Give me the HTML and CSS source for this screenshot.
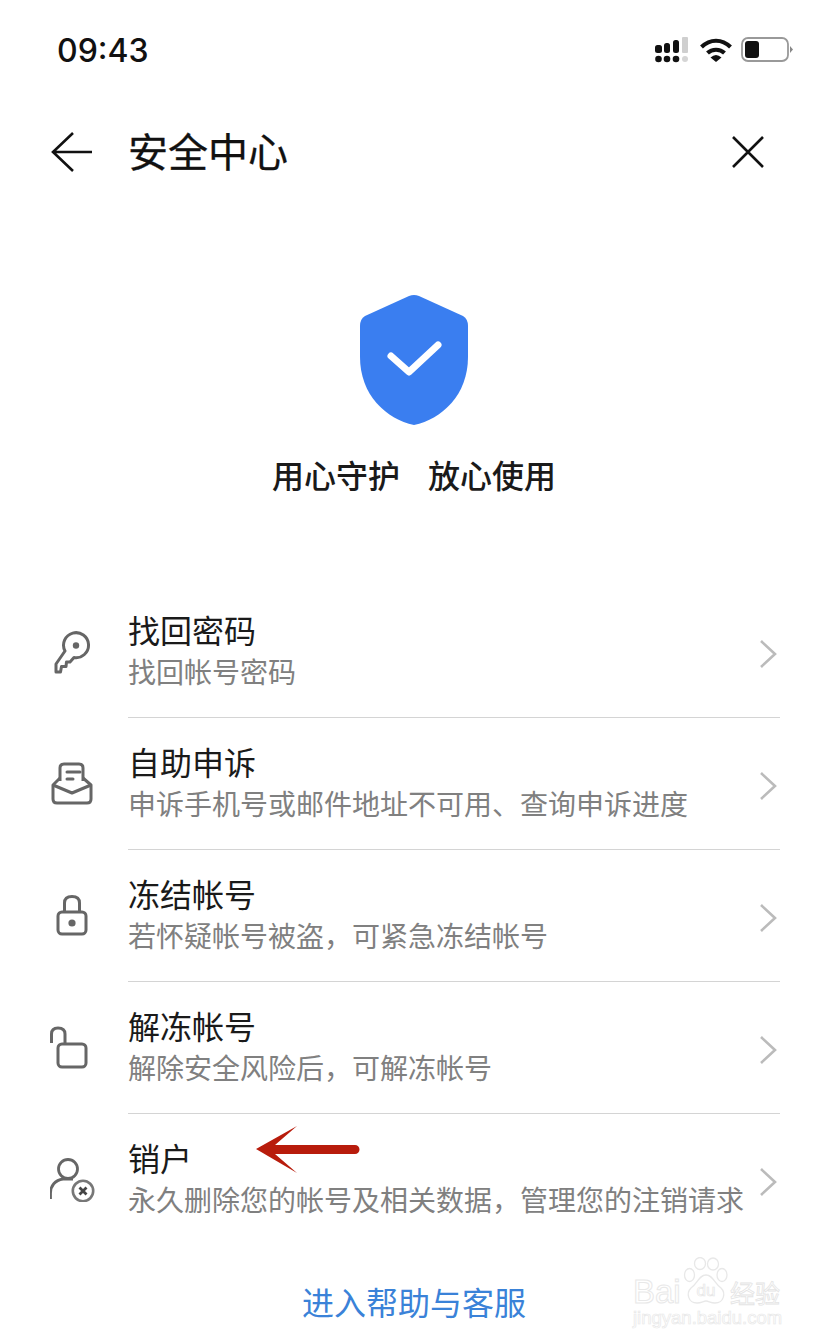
FILE: index.html
```html
<!DOCTYPE html>
<html lang="zh-CN">
<head>
<meta charset="utf-8">
<title>安全中心</title>
<link rel="stylesheet" href="styles.css">
</head>
<body>
<div class="page">
  <header class="status">
    <span class="time">09:43</span>
    <div class="status-icons">
      <svg class="sig" width="34" height="26" viewBox="0 0 34 26">
        <g fill="#111">
          <rect x="0" y="8" width="7" height="8" rx="2.500"/><rect x="9" y="6" width="6" height="10" rx="2.500"/><rect x="18" y="3" width="6" height="13" rx="2.500"/>
          <circle cx="3.500" cy="22" r="3.300"/><circle cx="12" cy="22" r="3.300"/><circle cx="21" cy="22" r="3.300"/>
        </g>
        <rect x="27" y="0" width="6" height="16" rx="1" fill="#cfcfcf"/><circle cx="30" cy="22" r="3" fill="#d5d5d5"/>
      </svg>
      <svg class="wifi" width="32" height="26" viewBox="0 0 32 26">
        <g fill="none" stroke="#111" stroke-width="4">
          <path d="M1.500 10C10 1.500 22 1.500 30.500 10"/><path d="M7.500 16C12 11.500 20 11.500 24.500 16"/>
        </g>
        <path d="M10.500 20.500Q16 15.500 21.500 20.500L16 25Z" fill="#111"/>
      </svg>
      <svg class="batt" width="52" height="26" viewBox="0 0 52 26">
        <rect x="1" y="1" width="46" height="23" rx="6" fill="none" stroke="#999" stroke-width="1.800"/>
        <rect x="4" y="4" width="14" height="17" rx="3" fill="#111"/>
        <path d="M49 9L52 12.500L49 16Z" fill="#888"/>
      </svg>
    </div>
  </header>

  <nav class="nav">
    <svg class="back" width="42" height="42" viewBox="0 0 42 42">
      <path d="M22 2L2 21L22 40M2 21H41" fill="none" stroke="#111" stroke-width="2.600"/>
    </svg>
    <h1 class="nav-title">安全中心</h1>
    <svg class="close" width="36" height="36" viewBox="0 0 36 36">
      <path d="M3 3L33 33M33 3L3 33" fill="none" stroke="#111" stroke-width="2.600"/>
    </svg>
  </nav>

  <section class="hero">
    <svg class="shield" width="108" height="130" viewBox="0 0 108 130">
      <path d="M49 1Q54 -1 59 1L103 21Q108 24 108 31V62C108 100 82 124 54 130C26 124 0 100 0 62V31Q0 24 5 21Z" fill="#3a7ef0"/>
      <path d="M31 61L49 77L78 50" fill="none" stroke="#fff" stroke-width="7" stroke-linecap="round" stroke-linejoin="round"/>
    </svg>
    <p class="slogan"><span>用心守护</span><span>放心使用</span></p>
  </section>

  <ul class="list">
    <li class="row">
      <div class="row-icon">
        <svg width="44" height="44" viewBox="0 0 44 44" fill="none" stroke="#666" stroke-width="3">
          <path d="M15 21A12.500 12.500 0 1 1 24 27.500L20 32H16.500L16 36.500H11.500L10.500 42H6V34Z" stroke-linejoin="round"/>
          <circle cx="26" cy="15.500" r="3.200" fill="#666" stroke="none"/>
        </svg>
      </div>
      <div class="row-body">
        <div class="row-text"><div class="row-title">找回密码</div><div class="row-sub">找回帐号密码</div></div>
        <svg class="chev" width="18" height="28" viewBox="0 0 18 28"><path d="M2 1L16 14L2 27" fill="none" stroke="#bbb" stroke-width="2.600"/></svg>
      </div>
    </li>
    <li class="row">
      <div class="row-icon">
        <svg width="44" height="44" viewBox="0 0 44 44" fill="none" stroke="#666" stroke-width="3" stroke-linejoin="round">
          <path d="M10 19V6Q10 2 14 2H29Q33 2 33 6V19"/>
          <path d="M10 16L3 23V37Q3 41 7 41H37Q41 41 41 37V23L33 16"/>
          <path d="M3 23L22 31L41 23"/>
          <path d="M17 10H30M17 17H23" stroke-linecap="round"/>
        </svg>
      </div>
      <div class="row-body">
        <div class="row-text"><div class="row-title">自助申诉</div><div class="row-sub">申诉手机号或邮件地址不可用、查询申诉进度</div></div>
        <svg class="chev" width="18" height="28" viewBox="0 0 18 28"><path d="M2 1L16 14L2 27" fill="none" stroke="#bbb" stroke-width="2.600"/></svg>
      </div>
    </li>
    <li class="row">
      <div class="row-icon">
        <svg width="44" height="44" viewBox="0 0 44 44" fill="none" stroke="#666" stroke-width="3">
          <rect x="8" y="18" width="28" height="22" rx="4"/>
          <path d="M14.500 18V9Q14.500 2.500 22 2.500Q29.500 2.500 29.500 9V18"/>
          <circle cx="22" cy="29" r="3.600" fill="#666" stroke="none"/>
        </svg>
      </div>
      <div class="row-body">
        <div class="row-text"><div class="row-title">冻结帐号</div><div class="row-sub">若怀疑帐号被盗，可紧急冻结帐号</div></div>
        <svg class="chev" width="18" height="28" viewBox="0 0 18 28"><path d="M2 1L16 14L2 27" fill="none" stroke="#bbb" stroke-width="2.600"/></svg>
      </div>
    </li>
    <li class="row">
      <div class="row-icon">
        <svg width="44" height="44" viewBox="0 0 44 44" fill="none" stroke="#666" stroke-width="3">
          <rect x="8" y="18" width="28" height="23" rx="4"/>
          <path d="M1.500 17V8Q1.500 2 8 2Q15 2 15 8V18"/>
        </svg>
      </div>
      <div class="row-body">
        <div class="row-text"><div class="row-title">解冻帐号</div><div class="row-sub">解除安全风险后，可解冻帐号</div></div>
        <svg class="chev" width="18" height="28" viewBox="0 0 18 28"><path d="M2 1L16 14L2 27" fill="none" stroke="#bbb" stroke-width="2.600"/></svg>
      </div>
    </li>
    <li class="row row-last">
      <div class="row-icon">
        <svg width="46" height="44" viewBox="1 0 46 44" fill="none" stroke="#666" stroke-width="2.800">
          <circle cx="19" cy="11" r="9.500"/>
          <path d="M1.500 41V35C1.500 28 6 22 14 21H24"/>
          <circle cx="34" cy="33" r="10.200" stroke-width="2.600" stroke="#777"/>
          <path d="M30.500 29.500L37.500 36.500M37.500 29.500L30.500 36.500" stroke="#444"/>
        </svg>
      </div>
      <div class="row-body">
        <div class="row-text"><div class="row-title">销户</div><div class="row-sub">永久删除您的帐号及相关数据，管理您的注销请求</div></div>
        <svg class="chev" width="18" height="28" viewBox="0 0 18 28"><path d="M2 1L16 14L2 27" fill="none" stroke="#bbb" stroke-width="2.600"/></svg>
      </div>
    </li>
  </ul>

  <a class="help">进入帮助与客服</a>

  <svg class="arrow" width="106" height="48" viewBox="0 0 106 48">
    <path d="M0 23L41 0L19 19H99A4.500 4.500 0 0 1 99 28H19L41 47Z" fill="#b81c0c"/>
  </svg>

  <div class="watermark">
    <div class="wm-line">
      <span class="wm-bai">Bai</span>
      <svg class="wm-paw" width="46" height="47" viewBox="0 0 46 47" fill="none" stroke="#e8e8e8" stroke-width="1.300">
        <ellipse cx="17" cy="6.500" rx="5.500" ry="6"/><ellipse cx="30" cy="7" rx="5.500" ry="6"/><ellipse cx="6.500" cy="18" rx="5" ry="6.500"/><ellipse cx="39" cy="18" rx="5" ry="6.500"/>
        <path d="M23 18C16 18 15 26 8 31C3 36 5 46 14 46C19 46 20 44 23 44C26 44 27 46 32 46C41 46 43 36 38 31C31 26 30 18 23 18Z"/>
        <text class="wm-du" x="23" y="39" text-anchor="middle">du</text>
      </svg>
      <span class="wm-cn">经验</span>
    </div>
    <div class="wm-url">jingyan.baidu.com</div>
  </div>
</div>
</body>
</html>
```
FILE: styles.css
```css
* { box-sizing: border-box; margin: 0; padding: 0; }
html, body { background: #fff; }
body {
  width: 826px;
  height: 1344px;
  overflow: hidden;
  font-family: "Noto Sans CJK SC", "Liberation Sans", sans-serif;
  color: #1a1a1a;
}
.page { position: relative; width: 826px; height: 1344px; }

.status {
  height: 100px;
  padding: 30px 33px 0 57px;
  display: flex;
  justify-content: space-between;
  align-items: flex-start;
}
.time {
  font-family: Inter, Roboto, "Liberation Sans", sans-serif;
  font-size: 32px;
  font-weight: 500;
  line-height: 38px;
  margin-top: 2px;
  color: #111;
}
.status-icons { display: flex; align-items: flex-start; margin-top: 7px; }
.sig { margin-right: 11px; }
.wifi { margin-right: 9px; }

.nav {
  height: 104px;
  padding: 0 60px 0 51px;
  display: flex;
  align-items: center;
}
.nav-title {
  font-size: 40px;
  font-weight: 400;
  line-height: 56px;
  margin-left: 35px;
  margin-top: -4px;
  flex: 1;
  color: #111;
  -webkit-text-stroke: 0.300px #111;
}
.close { flex: none; }

.hero {
  padding-top: 91px;
  display: flex;
  flex-direction: column;
  align-items: center;
  height: 382px;
}
.shield { margin-left: 2px; }
.slogan {
  margin-top: 26px;
  font-size: 32px;
  font-weight: 500;
  line-height: 46px;
  display: flex;
  gap: 28px;
  margin-left: 2px;
}

.list { list-style: none; }
.row { display: flex; height: 132px; }
.row-icon {
  width: 128px;
  flex: none;
  padding: 44px 0 0 50px;
}
.row-body {
  flex: 1;
  margin-right: 46px;
  display: flex;
  justify-content: space-between;
  border-bottom: 1px solid #d4d4d4;
  padding-right: 3px;
}
.row-last .row-body { border-bottom: none; }
.row-title { font-size: 32px; line-height: 40px; margin-top: 23px; color: #1a1a1a; }
.row-sub { font-size: 28px; line-height: 40px; margin-top: 2px; color: #808080; white-space: nowrap; }
.chev { margin-top: 54px; flex: none; }

.help {
  display: block;
  margin-top: 32px;
  padding-left: 2px;
  text-align: center;
  font-size: 32px;
  line-height: 46px;
  color: #3a82d8;
}

.arrow { position: absolute; left: 256px; top: 1126px; }

.watermark {
  position: absolute;
  left: 633px;
  top: 1257px;
  width: 150px;
  color: #fff;
  font-family: "Liberation Sans", "Noto Sans CJK SC", sans-serif;
}
.wm-line { display: flex; align-items: flex-end; height: 47px; }
.wm-bai {
  font-size: 33px;
  line-height: 30px;
  width: 50px;
  margin-bottom: -3px;
  -webkit-text-stroke: 1px #e8e8e8;
}
.wm-paw { flex: none; }
.wm-du { font-size: 17px; fill: #fff; stroke: #e6e6e6; stroke-width: 0.700px; }
.wm-cn {
  font-size: 25px;
  line-height: 30px;
  margin-left: 1px;
  margin-bottom: -3px;
  white-space: nowrap;
  font-family: "Noto Sans CJK SC", sans-serif;
  -webkit-text-stroke: 0.800px #e4e4e4;
}
.wm-url {
  font-size: 18.500px;
  line-height: 22px;
  margin-top: 3px;
  white-space: nowrap;
  -webkit-text-stroke: 0.700px #e8e8e8;
}
```
